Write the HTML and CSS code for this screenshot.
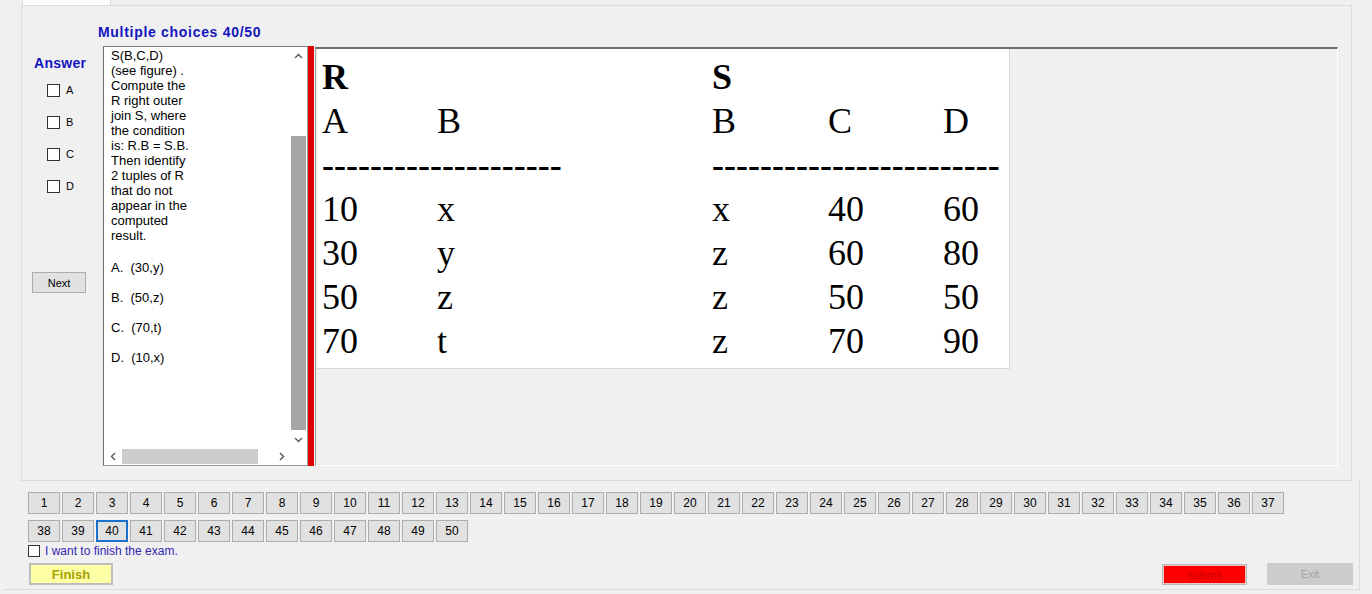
FILE: index.html
```html
<!DOCTYPE html>
<html>
<head>
<meta charset="utf-8">
<title>Exam</title>
<link rel="stylesheet" href="styles.css">
</head>
<body>
<div class="tabstrip"><div class="tab"></div></div>
<div class="page">
  <div class="title">Multiple choices 40/50</div>
  <div class="content">
    <div class="answer-col">
      <div class="answer-label">Answer</div>
      <div class="opts">
        <label class="opt"><span class="cb"></span>A</label>
        <label class="opt"><span class="cb"></span>B</label>
        <label class="opt"><span class="cb"></span>C</label>
        <label class="opt"><span class="cb"></span>D</label>
      </div>
      <button class="btn next">Next</button>
    </div>
    <div class="textbox">
      <div class="text">
        <div class="question">S(B,C,D)<br>(see figure) .<br>Compute the<br>R right outer<br>join S, where<br>the condition<br>is: R.B = S.B.<br>Then identify<br>2 tuples of R<br>that do not<br>appear in the<br>computed<br>result.</div>
        <div class="choices">
          <p>A.  (30,y)</p>
          <p>B.  (50,z)</p>
          <p>C.  (70,t)</p>
          <p>D.  (10,x)</p>
        </div>
      </div>
      <div class="vscroll">
        <span class="arrow"><svg width="9" height="6" viewBox="0 0 9 6"><polyline points="1,5 4.5,1.5 8,5" fill="none" stroke="#606060" stroke-width="1.5"/></svg></span>
        <div class="vtrack"><div class="vthumb"></div></div>
        <span class="arrow"><svg width="9" height="6" viewBox="0 0 9 6"><polyline points="1,1 4.5,4.5 8,1" fill="none" stroke="#606060" stroke-width="1.5"/></svg></span>
      </div>
      <div class="hscroll">
        <span class="arrow"><svg width="6" height="9" viewBox="0 0 6 9"><polyline points="5,1 1.5,4.5 5,8" fill="none" stroke="#606060" stroke-width="1.5"/></svg></span>
        <div class="htrack"><div class="hthumb"></div></div>
        <span class="arrow"><svg width="6" height="9" viewBox="0 0 6 9"><polyline points="1,1 4.5,4.5 1,8" fill="none" stroke="#606060" stroke-width="1.5"/></svg></span>
      </div>
      <div class="corner"></div>
    </div>
    <div class="splitter"></div>
    <div class="panel">
      <div class="figure">
        <b>R</b><span></span><b>S</b><span></span><span></span>
        <span>A</span><span>B</span><span>B</span><span>C</span><span>D</span>
        <span class="dash r">--------------------</span><span class="dash s">------------------------</span>
        <span>10</span><span>x</span><span>x</span><span>40</span><span>60</span>
        <span>30</span><span>y</span><span>z</span><span>60</span><span>80</span>
        <span>50</span><span>z</span><span>z</span><span>50</span><span>50</span>
        <span>70</span><span>t</span><span>z</span><span>70</span><span>90</span>
      </div>
    </div>
  </div>
</div>
<div class="bottom">
  <div class="qnav">
    <button class="btn q">1</button><button class="btn q">2</button><button class="btn q">3</button><button class="btn q">4</button><button class="btn q">5</button><button class="btn q">6</button><button class="btn q">7</button><button class="btn q">8</button><button class="btn q">9</button><button class="btn q">10</button><button class="btn q">11</button><button class="btn q">12</button><button class="btn q">13</button><button class="btn q">14</button><button class="btn q">15</button><button class="btn q">16</button><button class="btn q">17</button><button class="btn q">18</button><button class="btn q">19</button><button class="btn q">20</button><button class="btn q">21</button><button class="btn q">22</button><button class="btn q">23</button><button class="btn q">24</button><button class="btn q">25</button><button class="btn q">26</button><button class="btn q">27</button><button class="btn q">28</button><button class="btn q">29</button><button class="btn q">30</button><button class="btn q">31</button><button class="btn q">32</button><button class="btn q">33</button><button class="btn q">34</button><button class="btn q">35</button><button class="btn q">36</button><button class="btn q">37</button>
    <button class="btn q">38</button><button class="btn q">39</button><button class="btn q current">40</button><button class="btn q">41</button><button class="btn q">42</button><button class="btn q">43</button><button class="btn q">44</button><button class="btn q">45</button><button class="btn q">46</button><button class="btn q">47</button><button class="btn q">48</button><button class="btn q">49</button><button class="btn q">50</button>
  </div>
  <label class="fcheck"><span class="cb small"></span>I want to finish the exam.</label>
  <div class="actions">
    <button class="btn finish">Finish</button>
    <div class="right">
      <button class="btn submit">Submit</button>
      <button class="btn exit">Exit</button>
    </div>
  </div>
</div>
</body>
</html>
```
FILE: styles.css
```css
* { box-sizing: border-box; }
html, body { margin: 0; padding: 0; }
body {
  width: 1372px;
  height: 594px;
  overflow: hidden;
  background: #f0f0f0;
  font-family: "Liberation Sans", Arial, sans-serif;
  color: #000;
}
.tabstrip { height: 5px; }
.tab {
  margin-left: 22px;
  width: 89px;
  height: 5px;
  background: #fff;
  border-left: 1px solid #d9d9d9;
  border-right: 1px solid #d9d9d9;
}
.page {
  margin-left: 21px;
  width: 1331px;
  height: 476px;
  border: 1px solid #dcdcdc;
}
.title {
  height: 40px;
  padding: 17px 0 0 76px;
  font-size: 14px;
  line-height: 18px;
  font-weight: bold;
  letter-spacing: 0.7px;
  color: #1414c0;
}
.content { display: flex; height: 420px; }
.answer-col { width: 81px; flex: none; display: flex; flex-direction: column; align-items: flex-start; }
.answer-label {
  margin: 9px 0 0 12px;
  font-size: 14px;
  line-height: 16px;
  font-weight: bold;
  letter-spacing: 0.3px;
  color: #1414c0;
}
.opts { margin-top: 3px; }
.opt {
  height: 32px;
  display: flex;
  align-items: center;
  gap: 6px;
  padding-left: 25px;
  font-size: 11px;
}
.cb {
  width: 13px;
  height: 13px;
  border: 1px solid #333;
  background: #fff;
  flex: none;
}
.cb.small { width: 12px; height: 12px; }
.btn {
  padding: 0;
  margin: 0;
  font-family: "Liberation Sans", Arial, sans-serif;
  font-size: 12px;
  color: #000;
  background: #e1e1e1;
  border: 1px solid #adadad;
  border-radius: 0;
}
.next { margin: 70px 0 0 10px; width: 54px; height: 21px; font-size: 11px; }
.textbox {
  width: 205px;
  flex: none;
  background: #fff;
  border: 1px solid #9a9a9a;
  border-left-color: #6e6e6e;
  border-top-color: #7e7e7e;
  display: grid;
  grid-template-columns: 1fr 17px;
  grid-template-rows: 1fr 17px;
  overflow: hidden;
}
.text {
  padding: 1px 0 0 7px;
  font-size: 13px;
  line-height: 15px;
  overflow: hidden;
}
.choices { margin-top: 17px; }
.choices p { margin: 0 0 15px; white-space: pre; }
.vscroll { display: flex; flex-direction: column; background: #fff; }
.arrow { flex: none; width: 17px; height: 17px; display: flex; align-items: center; justify-content: center; }
.vtrack { flex: 1; padding-top: 72px; display: flex; justify-content: center; }
.vthumb { width: 15px; height: 294px; background: #a6a6a6; }
.hscroll { display: flex; background: #fff; }
.htrack { flex: 1; display: flex; align-items: center; }
.hthumb { margin-left: 1px; width: 136px; height: 15px; background: #cdcdcd; }
.corner { background: #fff; }
.splitter { width: 6px; flex: none; background: #e10000; }
.panel {
  flex: 1;
  margin: 1px 13px 0 1px;
  border-top: 2px solid #6f6f6f;
  border-left: 1px solid #a0a0a0;
  border-right: 1px solid #fff;
  border-bottom: 1px solid #fff;
}
.figure {
  margin-left: 1px;
  width: 693px;
  height: 320px;
  background: #fff;
  border-right: 1px solid #d8d8d8;
  border-bottom: 1px solid #d8d8d8;
  padding: 6px 0 0 5px;
  display: grid;
  grid-template-columns: 115px 275px 116px 115px 1fr;
  grid-auto-rows: 44px;
  font-family: "Liberation Serif", "Times New Roman", serif;
  font-size: 36px;
  line-height: 44px;
  white-space: nowrap;
}
.dash { font-weight: bold; overflow: hidden; }
.dash.r { grid-column: 1 / span 2; }
.dash.s { grid-column: 3 / span 3; }
.bottom {
  margin-left: 3px;
  width: 1357px;
  height: 109px;
  border-right: 1px solid #dcdcdc;
  border-bottom: 1px solid #dcdcdc;
  padding: 11px 6px 0 25px;
}
.qnav { display: flex; flex-wrap: wrap; width: 1258px; gap: 6px 2px; }
.q { width: 32px; height: 22px; }
.q.current { border: 2px solid #1a73c9; }
.fcheck {
  display: flex;
  align-items: center;
  gap: 5px;
  height: 16px;
  margin-top: 1px;
  font-size: 12px;
  color: #3327b3;
}
.actions {
  display: flex;
  justify-content: space-between;
  align-items: flex-end;
  margin-top: 4px;
  height: 22px;
}
.finish {
  margin-left: 1px;
  width: 84px;
  height: 22px;
  background: #ffffa5;
  border: 2px solid #bdbdbd;
  font-size: 13px;
  font-weight: bold;
  color: #a3a300;
}
.right { display: flex; gap: 20px; align-items: flex-end; }
.submit {
  width: 85px;
  height: 21px;
  background: #ff0000;
  border: 1px solid #b9b9b9;
  box-shadow: inset 0 0 0 1px #f2c4c4;
  font-size: 11px;
  color: #c80000;
}
.exit {
  width: 86px;
  height: 22px;
  background: #cccccc;
  border: 1px solid #cccccc;
  font-size: 11px;
  color: #a3a3a3;
}
```
